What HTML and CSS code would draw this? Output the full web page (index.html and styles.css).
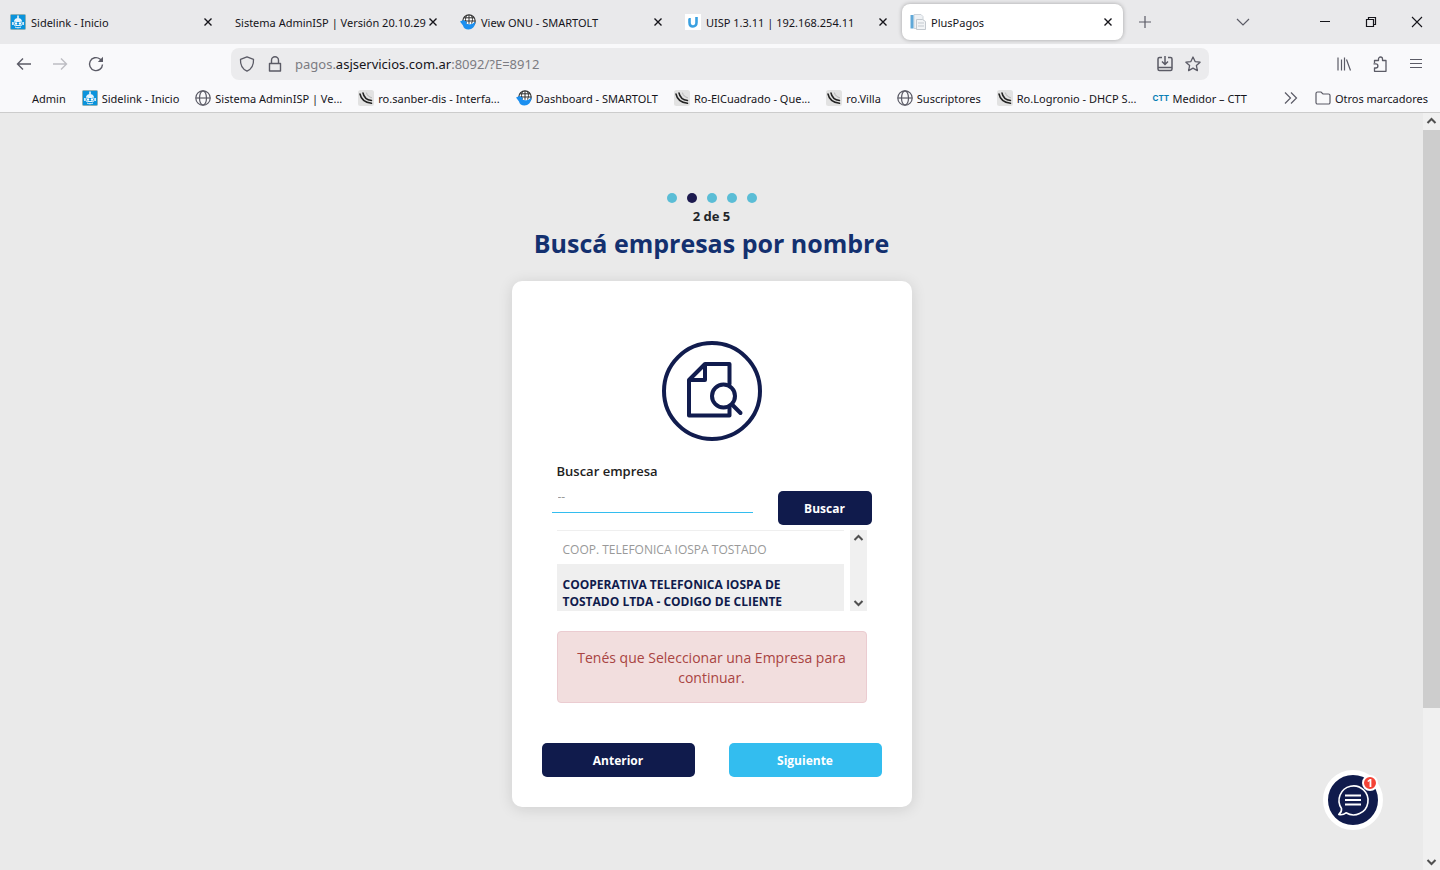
FILE: index.html
```
<!DOCTYPE html>
<html lang="es">
<head>
<meta charset="UTF-8">
<meta name="viewport" content="width=device-width, initial-scale=1.0">
<title>PlusPagos</title>
<link rel="stylesheet" href="styles.css">
</head>
<body>

<!-- shared icons -->
<svg class="defs" width="0" height="0" aria-hidden="true">
    <symbol id="robot" viewBox="0 0 16 16">
        <rect x=".5" y=".5" width="15" height="15" rx="1" fill="#0a93dc" stroke="#8fb0b4"/>
        <path d="M8 1.500v3" stroke="#fff" stroke-width="1.500"/>
        <path d="M4 7c.5-2 2-3 4-3s3.500 1 4 3z" fill="#e8f5fc"/>
        <path d="M2.500 8v3M13.500 8v3" stroke="#cfeaf8"/>
        <rect x="3.500" y="7.500" width="9" height="4" rx="2" fill="#0a93dc" stroke="#e8f5fc"/>
        <circle cx="6" cy="9.500" r="1.200" fill="#fff"/>
        <circle cx="10" cy="9.500" r="1.200" fill="#fff"/>
        <path d="M5 13c2 1 4 1 6 0" fill="none" stroke="#e8f5fc"/>
    </symbol>
    <symbol id="olt" viewBox="0 0 16 16">
        <circle cx="9" cy="7" r="6.200" fill="#fff" stroke="#333" stroke-width="1.200"/>
        <path d="M9 .8v9M4 3.800h10M3 7h12M6.500 1.500c-1.300 3-1.300 5 0 8M11.500 1.500c1.300 3 1.300 5 0 8" fill="none" stroke="#333"/>
        <path d="M0 7.500l3.500-1.500L7 8 6 9.500c3 1.500 6 1 9.500-2-.3 5-3.300 8-7 8-3 0-5-1.500-5.500-4z" fill="#1b8ff0"/>
    </symbol>
    <symbol id="globe" viewBox="0 0 16 16">
        <g fill="none" stroke="#5b5b66" stroke-width="1.200">
            <circle cx="8" cy="8" r="7.200"/>
            <ellipse cx="8" cy="8" rx="3.500" ry="7.200"/>
            <path d="M.8 8h14.400"/>
        </g>
    </symbol>
    <symbol id="mikrotik" viewBox="0 0 16 16">
        <rect width="16" height="16" rx="2.500" fill="#e2e2e2"/>
        <g fill="none" stroke="#222" stroke-linecap="round">
            <path d="M2 4c1 5 5 8.500 11.500 9.300" stroke-width="1.500"/>
            <path d="M5 3c.8 4 4 7 8.500 7.500" stroke-width="1.500"/>
            <path d="M8.500 3c.5 2.500 2.500 4 5 4.700" stroke="#aaa" stroke-width=".8"/>
        </g>
    </symbol>
    <symbol id="close" viewBox="0 0 16 16">
        <path d="M4.500 4.500l7 7M11.500 4.500l-7 7" stroke="#15141a" stroke-width="1.400"/>
    </symbol>
    <symbol id="up" viewBox="0 0 17 17">
        <path d="M4.500 10l4-4 4 4" fill="none" stroke="#505050" stroke-width="2"/>
    </symbol>
    <symbol id="down" viewBox="0 0 17 17">
        <path d="M4.500 7l4 4 4-4" fill="none" stroke="#505050" stroke-width="2"/>
    </symbol>
</svg>

<header class="browser">
    <div class="tabs">
        <div class="tab">
            <svg class="icon"><use href="#robot"/></svg>
            <span class="tab-title">Sidelink - Inicio</span>
            <button class="tab-close" aria-label="Cerrar"><svg class="icon"><use href="#close"/></svg></button>
        </div>
        <div class="tab">
            <span class="tab-title">Sistema AdminISP | Versión 20.10.29</span>
            <button class="tab-close" aria-label="Cerrar"><svg class="icon"><use href="#close"/></svg></button>
        </div>
        <div class="tab">
            <svg class="icon"><use href="#olt"/></svg>
            <span class="tab-title">View ONU - SMARTOLT</span>
            <button class="tab-close" aria-label="Cerrar"><svg class="icon"><use href="#close"/></svg></button>
        </div>
        <div class="tab">
            <svg class="icon" viewBox="0 0 16 16">
                <rect width="16" height="16" fill="#fff"/>
                <path d="M4.500 4v4.500c0 2.500 1.500 4 3.500 4s3.500-1.500 3.500-4V3" fill="none" stroke="#3aa0e0" stroke-width="2.600"/>
                <path d="M3 4h1M5 3h1" stroke="#fff"/>
            </svg>
            <span class="tab-title">UISP 1.3.11 | 192.168.254.11</span>
            <button class="tab-close" aria-label="Cerrar"><svg class="icon"><use href="#close"/></svg></button>
        </div>
        <div class="tab active">
            <svg class="icon" viewBox="0 0 16 16">
                <path d="M4 .5h7l2 2v12H4z" fill="#eef1f4" stroke="#cdd3d9"/>
                <path d="M.5 1h3v13.500h-3z" fill="#5fa8d8"/>
                <path d="M6.500 5.500h6l3 2v8h-9z" fill="#f2f4f6" stroke="#c3c9cf"/>
                <path d="M8 9h6M8 12h6" stroke="#c3c9cf"/>
            </svg>
            <span class="tab-title">PlusPagos</span>
            <button class="tab-close" aria-label="Cerrar"><svg class="icon"><use href="#close"/></svg></button>
        </div>
        <button class="new-tab" aria-label="Nueva pestaña">
            <svg class="icon" viewBox="0 0 16 16"><path d="M8 2v12M2 8h12" stroke="#5b5b66" stroke-width="1.200"/></svg>
        </button>
        <div class="window-controls">
            <button class="all-tabs" aria-label="Listar pestañas">
                <svg class="icon" viewBox="0 0 16 16"><path d="M2 5l6 6 6-6" fill="none" stroke="#5b5b66" stroke-width="1.200"/></svg>
            </button>
            <button aria-label="Minimizar">
                <svg class="icon" viewBox="0 0 16 16"><path d="M3 7.500h10" stroke="#15141a"/></svg>
            </button>
            <button aria-label="Restaurar">
                <svg class="icon" viewBox="0 0 16 16"><path d="M3.500 5.500h7v7h-7zM5.500 5V3.500h7v7H11" fill="none" stroke="#15141a" stroke-width="1.200"/></svg>
            </button>
            <button aria-label="Cerrar ventana">
                <svg class="icon" viewBox="0 0 16 16"><path d="M3 3l10 10M13 3L3 13" stroke="#15141a" stroke-width="1.100"/></svg>
            </button>
        </div>
    </div>

    <div class="toolbar">
        <div class="nav">
            <button aria-label="Atrás">
                <svg class="icon" viewBox="0 0 16 16"><path d="M15 8H1.500M7 2.500L1.500 8 7 13.500" fill="none" stroke="#5b5b66" stroke-width="1.400"/></svg>
            </button>
            <button aria-label="Adelante" disabled>
                <svg class="icon" viewBox="0 0 16 16"><path d="M1 8h13.500M9 2.500L14.500 8 9 13.500" fill="none" stroke="#bdbdc3" stroke-width="1.400"/></svg>
            </button>
            <button aria-label="Recargar">
                <svg class="icon" viewBox="0 0 16 16">
                    <path d="M14.500 8.500A6.500 6.500 0 1 1 12 3l1 1" fill="none" stroke="#5b5b66" stroke-width="1.400"/>
                    <path d="M15 .8V6H9.800z" fill="#5b5b66"/>
                </svg>
            </button>
        </div>
        <div class="urlbar">
            <svg class="icon" viewBox="0 0 16 16"><path d="M8 .8l6.500 2.600c.3 5-1.700 9.600-6.500 11.800C3.200 13 1.200 8.400 1.500 3.400z" fill="none" stroke="#5b5b66" stroke-width="1.300" stroke-linejoin="round"/></svg>
            <svg class="icon" viewBox="0 0 16 16"><path d="M2.500 7.500h11v7.500h-11zM4.500 7.500V4.200a3.500 3.500 0 0 1 7 0v3.300" fill="none" stroke="#5b5b66" stroke-width="1.400" stroke-linejoin="round"/></svg>
            <span class="url">pagos.<b>asjservicios.com.ar</b>:8092/?E=8912</span>
            <button aria-label="Guardar">
                <svg class="icon" viewBox="0 0 16 16"><path d="M5 1.500H2.500a1.500 1.500 0 0 0-1.500 1.500v10a1.500 1.500 0 0 0 1.500 1.500h11a1.500 1.500 0 0 0 1.500-1.500V3a1.500 1.500 0 0 0-1.500-1.500H11M1 11.500h14M8 0v8M5 5.500l3 3 3-3" fill="none" stroke="#5b5b66" stroke-width="1.500"/></svg>
            </button>
            <button aria-label="Agregar a marcadores">
                <svg class="icon" viewBox="0 0 16 16"><path d="M8 1l2.100 4.600 5 .6-3.700 3.400 1 5L8 12.100l-4.400 2.500 1-5L.9 6.200l5-.6z" fill="none" stroke="#5b5b66" stroke-width="1.300" stroke-linejoin="round"/></svg>
            </button>
        </div>
        <div class="tools">
            <button aria-label="Biblioteca">
                <svg class="icon" viewBox="0 0 16 16"><path d="M2 1.500v13M5.500 3.500v11M8.500 1.500v13M10.500 3.500l4 11" stroke="#5b5b66" stroke-width="1.200"/></svg>
            </button>
            <button aria-label="Extensiones">
                <svg class="icon" viewBox="0 0 16 16"><path d="M2.500 7V4.500h4V3a2 2 0 0 1 4 0v1.500H14v10.800H2.500V12h1.300a2 2 0 0 0 0-4.200H1.500" fill="none" stroke="#5b5b66" stroke-width="1.300" stroke-linejoin="round"/></svg>
            </button>
            <button aria-label="Menú">
                <svg class="icon" viewBox="0 0 16 16"><path d="M2 3.500h12M2 7.500h12M2 11.500h12" stroke="#5b5b66" stroke-width="1.200"/></svg>
            </button>
        </div>
    </div>

    <nav class="bookmarks">
        <a href="#" class="no-icon">Admin</a>
        <a href="#"><svg class="icon"><use href="#robot"/></svg>Sidelink - Inicio</a>
        <a href="#"><svg class="icon"><use href="#globe"/></svg>Sistema AdminISP | Ve...</a>
        <a href="#"><svg class="icon"><use href="#mikrotik"/></svg>ro.sanber-dis - Interfa...</a>
        <a href="#"><svg class="icon"><use href="#olt"/></svg>Dashboard - SMARTOLT</a>
        <a href="#"><svg class="icon"><use href="#mikrotik"/></svg>Ro-ElCuadrado - Que...</a>
        <a href="#"><svg class="icon"><use href="#mikrotik"/></svg>ro.Villa</a>
        <a href="#"><svg class="icon"><use href="#globe"/></svg>Suscriptores</a>
        <a href="#"><svg class="icon"><use href="#mikrotik"/></svg>Ro.Logronio - DHCP S...</a>
        <a href="#"><span class="ctt">CTT</span>Medidor – CTT</a>
        <button class="more" aria-label="Más marcadores">
            <svg class="icon" viewBox="0 0 16 16"><path d="M2 2.500L7.500 8 2 13.500M8 2.500L13.500 8 8 13.500" fill="none" stroke="#5b5b66" stroke-width="1.200"/></svg>
        </button>
        <a href="#"><svg class="icon" viewBox="0 0 16 16"><path d="M1 12.500V3.500A1.500 1.500 0 0 1 2.500 2H6l2 2h5.500A1.500 1.500 0 0 1 15 5.500v7a1.500 1.500 0 0 1-1.500 1.500h-11A1.500 1.500 0 0 1 1 12.500z" fill="none" stroke="#5b5b66" stroke-width="1.200"/></svg>Otros marcadores</a>
    </nav>
</header>

<div class="viewport">
    <main class="page">
        <div class="steps">
            <span class="dot"></span>
            <span class="dot current"></span>
            <span class="dot"></span>
            <span class="dot"></span>
            <span class="dot"></span>
        </div>
        <p class="step-text">2 de 5</p>
        <h1>Buscá empresas por nombre</h1>

        <form class="card">
            <svg class="card-icon" viewBox="0 0 100 100">
                <g fill="none" stroke="#111c4e" stroke-width="4" stroke-linejoin="round" stroke-linecap="round">
                    <circle cx="50" cy="50" r="48"/>
                    <path d="M67.500 43V23H43L27 39v35.500h40.500V66M43 23v16H27"/>
                    <circle cx="61.500" cy="55" r="11.500" fill="#fff"/>
                    <path d="M70 63.500l8.500 8.500"/>
                </g>
            </svg>
            <div class="card-body">
                <label for="empresa">Buscar empresa</label>
                <div class="search">
                    <input type="text" id="empresa" placeholder="--">
                    <button type="button" class="btn">Buscar</button>
                </div>
                <div class="results">
                    <ul>
                        <li><button type="button">COOP. TELEFONICA IOSPA TOSTADO</button></li>
                        <li class="selected"><button type="button">COOPERATIVA TELEFONICA IOSPA DE TOSTADO LTDA - CODIGO DE CLIENTE</button></li>
                    </ul>
                    <div class="scroll">
                        <svg><use href="#up"/></svg>
                        <svg><use href="#down"/></svg>
                    </div>
                </div>
                <div class="alert" role="alert">Tenés que Seleccionar una Empresa para continuar.</div>
            </div>
            <div class="actions">
                <button type="button" class="btn">Anterior</button>
                <button type="button" class="btn next">Siguiente</button>
            </div>
        </form>
    </main>
    <div class="scroll page-scroll">
        <svg><use href="#up"/></svg>
        <div class="track"><div class="thumb"></div></div>
        <svg><use href="#down"/></svg>
    </div>
    <button class="chat" aria-label="Chat">
        <svg viewBox="0 0 50 50">
            <g fill="none" stroke="#fff">
                <path d="M13.500 33.500A14.500 14.500 0 1 1 18 37.800C16 39.500 13.500 40 10.800 39.500c2-1.500 3-3.500 2.700-6z" stroke-width="1.600" stroke-linejoin="round"/>
                <path d="M17 20.500h16M17 25h16M17 29.500h16" stroke-width="2"/>
            </g>
        </svg>
        <span class="badge">1</span>
    </button>
</div>

</body>
</html>
```
FILE: styles.css
```
* {
    box-sizing: border-box;
}
body {
    margin: 0;
    height: 100vh;
    display: flex;
    flex-direction: column;
    overflow: hidden;
    font-family: "Open Sans", sans-serif;
    background-color: #eaeaea;
}
button {
    padding: 0;
    border: none;
    background: none;
    font-family: inherit;
    cursor: pointer;
}
.defs {
    position: absolute;
}
.icon {
    display: block;
    flex: none;
    width: 16px;
    height: 16px;
}

/* browser */
.browser {
    flex: none;
    font-size: 11px;
    color: #15141a;
    background-color: #f9f9fb;
    border-bottom: 1px solid #ccc;
    font-family: "Noto Sans", sans-serif;
}
.tabs {
    display: flex;
    align-items: center;
    height: 44px;
    background-color: #e9e9eb;
}
.tab {
    display: flex;
    align-items: center;
    flex: 0 1 221px;
    min-width: 0;
    height: 36px;
    margin: 0 2px;
    padding: 0 7px 0 8px;
    border-radius: 8px;
}
.tab.active {
    background-color: #fff;
    box-shadow: 0 0 4px rgba(0, 0, 0, 0.3);
}
.tab-title {
    flex: 1;
    min-width: 0;
    white-space: nowrap;
}
.tab .icon + .tab-title {
    margin-left: 5px;
}
.new-tab {
    margin-left: 12px;
}
.window-controls {
    display: flex;
    gap: 30px;
    margin-left: auto;
    padding-right: 15px;
}
.all-tabs {
    margin-right: 36px;
}
.toolbar {
    display: flex;
    align-items: center;
    height: 40px;
    padding: 0 16px;
}
.nav, .tools {
    display: flex;
    gap: 20px;
}
.tools {
    margin-left: auto;
}
.urlbar {
    display: flex;
    align-items: center;
    flex: 0 1 978px;
    gap: 12px;
    height: 32px;
    margin: 0 auto 0 127px;
    padding: 0 8px;
    border-radius: 8px;
    background-color: #ebebed;
}
.url {
    flex: 1;
    font-size: 13px;
    color: #7c7c82;
}
.url b {
    font-weight: normal;
    color: #15141a;
}
.bookmarks {
    display: flex;
    align-items: center;
    gap: 16px;
    height: 28px;
    padding: 0 12px;
}
.bookmarks a {
    display: flex;
    align-items: center;
    gap: 4px;
    white-space: nowrap;
    color: #15141a;
    text-decoration: none;
}
.bookmarks .no-icon {
    padding-left: 20px;
}
.ctt {
    font: bold 8px "Inter", sans-serif;
    width: 16px;
    color: #0a7fb5;
}
.more {
    margin-left: auto;
}

/* page */
.viewport {
    flex: 1;
    display: flex;
    min-height: 0;
}
.page {
    flex: 1;
    display: flex;
    flex-direction: column;
    align-items: center;
    padding-top: 80px;
}
.steps {
    display: flex;
    gap: 10px;
}
.dot {
    width: 10px;
    height: 10px;
    border-radius: 50%;
    background-color: #5bbdd6;
}
.dot.current {
    background-color: #1d1a4f;
}
.step-text {
    margin: 3px 0 0;
    font-size: 13px;
    font-weight: bold;
    line-height: 20px;
    color: #212529;
}
h1 {
    margin: 0 0 20px;
    font-size: 25px;
    font-weight: bold;
    line-height: 35px;
    color: #13306f;
}
.card {
    width: 400px;
    padding: 60px 30px 30px;
    border-radius: 10px;
    background-color: #fff;
    box-shadow: 0 2px 15px rgba(0, 0, 0, 0.12);
}
.card-icon {
    display: block;
    width: 100px;
    height: 100px;
    margin: 0 auto 20px;
}
.card-body {
    padding: 0 15px;
}
label {
    display: block;
    font-size: 13px;
    font-weight: 600;
    line-height: 20px;
    color: #212121;
}
.search {
    display: flex;
    align-items: flex-start;
    gap: 25px;
    margin: 0 -5px 5px;
}
.search input {
    flex: 1;
    min-width: 0;
    height: 32px;
    padding: 0 6px;
    border: none;
    border-bottom: 1px solid #33bdef;
    font: 12px "Open Sans", sans-serif;
}
.search input::placeholder {
    color: #999;
}
.btn {
    height: 34px;
    border-radius: 5px;
    font-size: 12px;
    font-weight: bold;
    color: #fff;
    background-color: #101b4c;
}
.search .btn {
    width: 94px;
    margin-top: 10px;
}
.results {
    display: flex;
    gap: 6px;
    height: 81px;
    overflow: hidden;
}
.results ul {
    flex: 1;
    margin: 0;
    padding: 0;
    list-style: none;
}
.results li {
    border-top: 1px solid #efefef;
}
.results li button {
    width: 100%;
    padding: 10px 16px 6px 6px;
    font-size: 12px;
    line-height: 17px;
    text-align: left;
    color: #999;
}
.results li.selected {
    background-color: #efefef;
}
.results li.selected button {
    padding-top: 11px;
    font-weight: bold;
    color: #101b4c;
}
.scroll {
    display: flex;
    flex-direction: column;
    justify-content: space-between;
    width: 17px;
    background-color: #f0f0f0;
}
.scroll svg {
    width: 17px;
    height: 17px;
}
.track {
    flex: 1;
}
.thumb {
    height: 80%;
    background-color: #cdcdcd;
}
.alert {
    margin-top: 20px;
    padding: 16px 15px 14px;
    border: 1px solid #ebccd1;
    border-radius: 4px;
    font-size: 14px;
    line-height: 20px;
    text-align: center;
    color: #a94442;
    background-color: #f2dede;
}
.actions {
    display: grid;
    grid-template-columns: 1fr 1fr;
    gap: 34px;
    margin-top: 40px;
}
.btn.next {
    background-color: #33bdef;
}

/* chat bubble floating over the page */
.chat {
    position: fixed;
    right: 57px;
    bottom: 40px;
    width: 60px;
    height: 60px;
    border: 5px solid #fff;
    border-radius: 50%;
    background-color: #101b4c;
}
.chat svg {
    display: block;
    width: 50px;
    height: 50px;
}
.badge {
    position: absolute;
    top: 0;
    right: 0;
    width: 16px;
    height: 16px;
    border: 2px solid #fff;
    border-radius: 50%;
    font-size: 11px;
    font-weight: bold;
    line-height: 12px;
    color: #fff;
    background-color: #f44336;
}
```
